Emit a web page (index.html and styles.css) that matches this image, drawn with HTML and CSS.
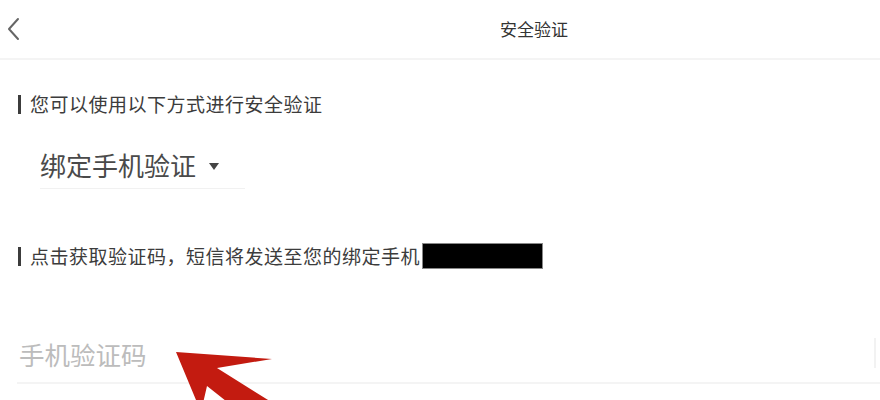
FILE: index.html
```html
<!DOCTYPE html>
<html lang="zh">
<head>
<meta charset="utf-8">
<title>安全验证</title>
<link rel="stylesheet" href="styles.css">
</head>
<body>
<div class="page">
  <header class="topbar">
    <svg class="back" width="14" height="24" viewBox="0 0 14 24"><path d="M12 2 L3 12 L12 22" fill="none" stroke="#666" stroke-width="2" stroke-linecap="round" stroke-linejoin="round"/></svg>
    <div class="title">安全验证</div>
  </header>
  <main class="content">
    <div class="label label-first"><span class="bar"></span><span>您可以使用以下方式进行安全验证</span></div>
    <div class="select">
      <span class="select-text">绑定手机验证</span>
      <span class="caret"></span>
    </div>
    <div class="label label-second"><span class="bar"></span><span>点击获取验证码，短信将发送至您的绑定手机</span><span class="mask"></span></div>
    <div class="field">
      <input class="code-input" type="text" placeholder="手机验证码">
      <span class="field-edge"></span>
    </div>
  </main>
  <svg class="arrow" width="880" height="400" viewBox="0 0 880 400">
    <polygon points="176,352 272,359 217,368 300,420 250,420 207,386 201,412" fill="#c31b10"/>
  </svg>
</div>
</body>
</html>
```
FILE: styles.css
```css
html, body {
  margin: 0;
  padding: 0;
  background: #ffffff;
}
body {
  font-family: "Noto Sans CJK SC", "Noto Sans", sans-serif;
  color: #333;
}
.page {
  position: relative;
  width: 880px;
  height: 400px;
  overflow: hidden;
  background: #fff;
}
.topbar {
  height: 58px;
  display: flex;
  align-items: center;
  border-bottom: 2px solid #f4f4f4;
}
.back {
  margin-left: 6px;
  flex: none;
}
.title {
  margin-left: 480px;
  font-size: 17px;
  line-height: 24px;
  color: #333;
}
.content {
  display: flex;
  flex-direction: column;
  align-items: flex-start;
}
.label {
  display: flex;
  align-items: center;
  padding-left: 18px;
  font-size: 19px;
  line-height: 24px;
  letter-spacing: 0.5px;
  color: #3c3c3c;
}
.label-first {
  margin-top: 32px;
}
.label-second {
  margin-top: 54px;
}
.bar {
  width: 3px;
  height: 19px;
  background: #3c3c3c;
  margin-right: 9px;
  flex: none;
}
.mask {
  width: 121px;
  height: 26px;
  background: #000;
  margin-left: 2px;
  border: 1px solid #888;
  box-sizing: border-box;
}
.select {
  margin-top: 32px;
  margin-left: 40px;
  width: 205px;
  display: flex;
  align-items: center;
  padding-bottom: 6px;
  border-bottom: 1px solid #f1f1f1;
}
.select-text {
  font-size: 26px;
  line-height: 34px;
  color: #4a4a4a;
}
.caret {
  margin-left: 13px;
  width: 0;
  height: 0;
  border-left: 5.5px solid transparent;
  border-right: 5.5px solid transparent;
  border-top: 7px solid #444;
  margin-top: 3px;
}
.field {
  margin-top: 67px;
  margin-left: 17px;
  align-self: stretch;
  display: flex;
  align-items: center;
  padding-bottom: 12px;
  border-bottom: 2px solid #f4f4f4;
}
.code-input {
  flex: 1;
  border: none;
  outline: none;
  padding: 0 0 0 2px;
  margin: 0;
  height: 34px;
  font-family: "Noto Sans CJK SC", "Noto Sans", sans-serif;
  font-size: 25.5px;
  color: #333;
  background: transparent;
}
.code-input::placeholder {
  color: #bcbcbc;
}
.field-edge {
  width: 2px;
  height: 30px;
  background: #f2f2f2;
  margin-right: 4px;
}
.arrow {
  position: absolute;
  left: 0;
  top: 0;
  pointer-events: none;
}
```
